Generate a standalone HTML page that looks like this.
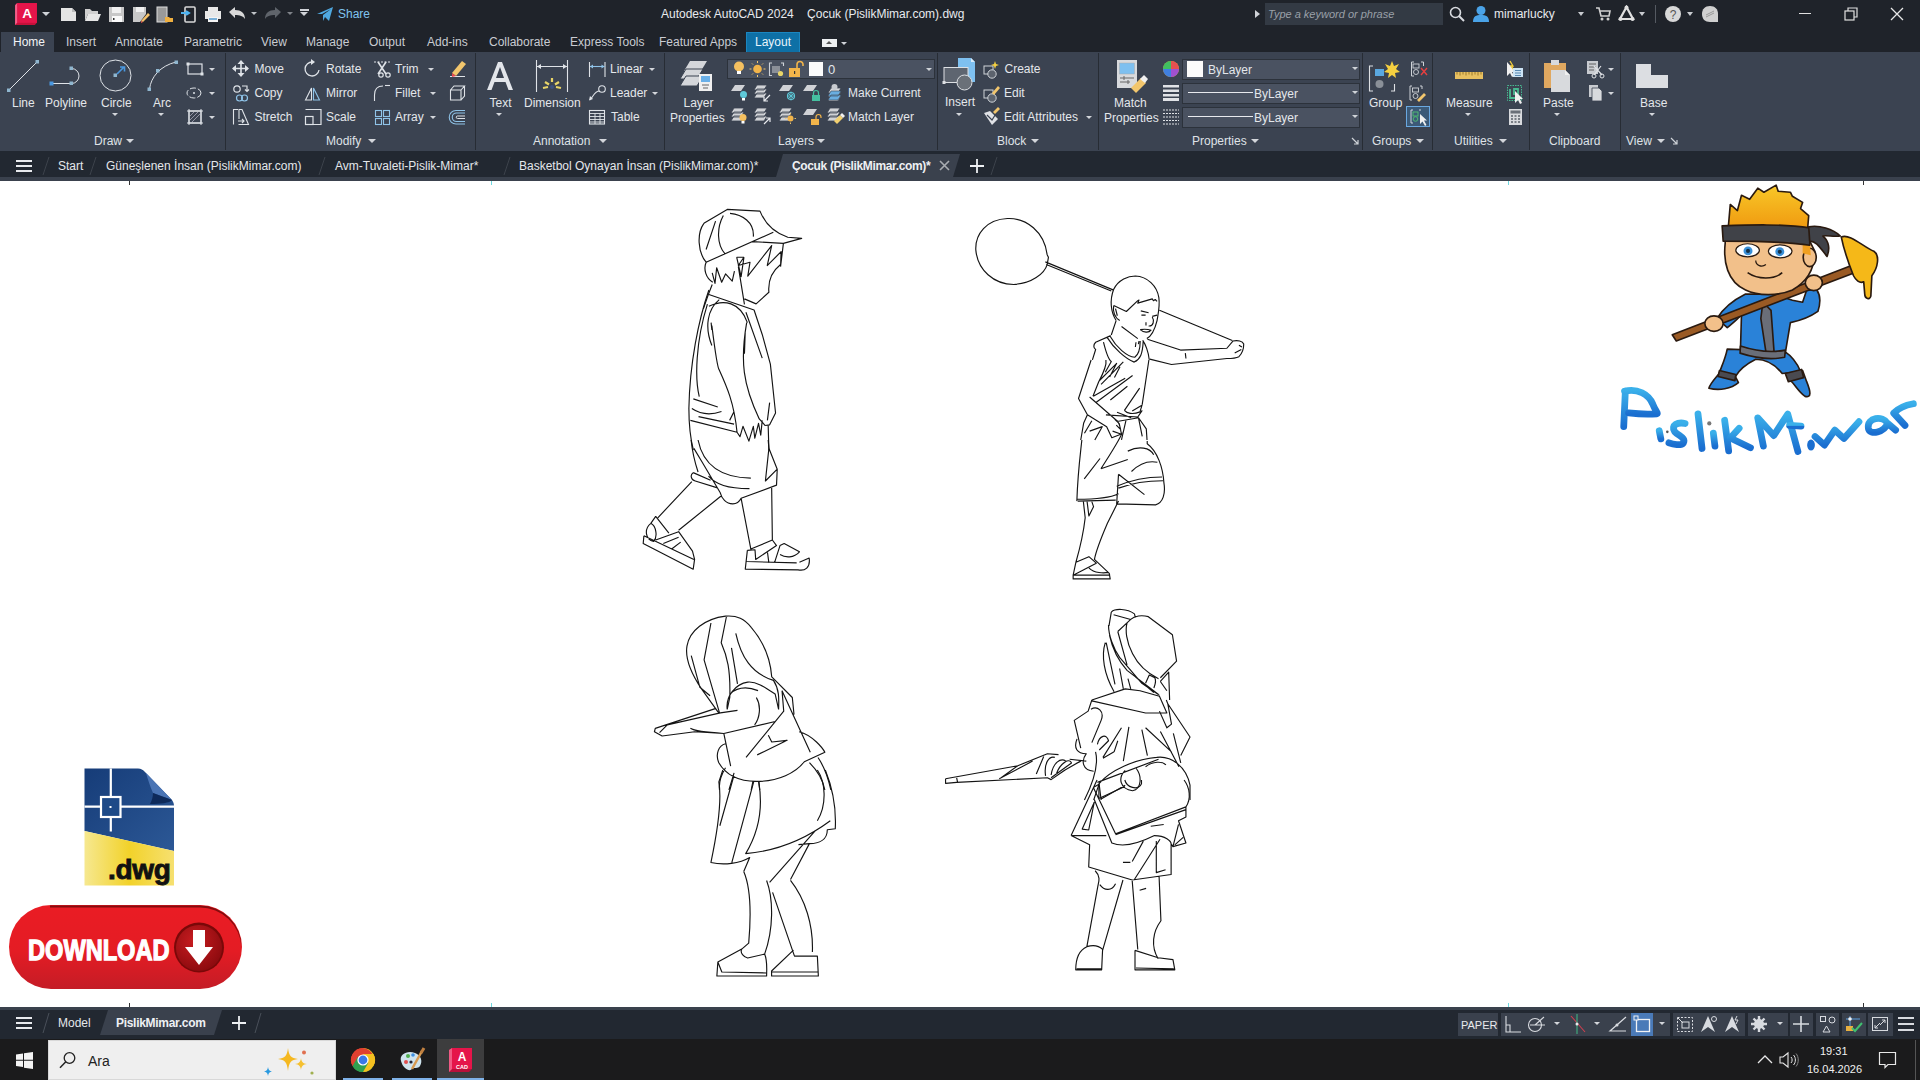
<!DOCTYPE html>
<html><head><meta charset="utf-8">
<style>
*{margin:0;padding:0;box-sizing:border-box}
html,body{width:1920px;height:1080px;overflow:hidden;background:#fff;font-family:"Liberation Sans",sans-serif}
.a{position:absolute}
.t{position:absolute;white-space:nowrap;color:#e6e8ec;font-size:12px;line-height:14px}
#title{left:0;top:0;width:1920px;height:28px;background:#1f232a}
#tabs{left:0;top:28px;width:1920px;height:24px;background:#1f232a}
</style></head><body>
<div id="title" class="a">
<!-- logo -->
<svg class="a" style="left:13px;top:0px" width="27" height="27" viewBox="0 0 26 26">
<path d="M2 5 L4 3 L23 3 L23 22 L21 24 L2 24 Z" fill="#c5113a"/>
<path d="M4 3 L23 3 L23 22 L4 22 Z" fill="#e5154a"/>
<path d="M2 5 L4 3 L4 22 L2 24 Z" fill="#f0608a"/>
<text x="13.5" y="17.5" font-family="Liberation Sans" font-weight="bold" font-size="13" fill="#fff" text-anchor="middle">A</text>
</svg>
<div class="a" style="left:42px;top:12px;border-left:4px solid transparent;border-right:4px solid transparent;border-top:4px solid #d0d3d8"></div>
<!-- new -->
<svg class="a" style="left:60px;top:7px" width="18" height="15"><path d="M1 1 H12 L16 5 V14 H1 Z" fill="#e4e4e4"/><path d="M12 1 V5 H16" fill="#bbb"/></svg>
<!-- open -->
<svg class="a" style="left:84px;top:7px" width="18" height="15"><path d="M1 2 H6 L8 4 H14 V7 H4 L1 14 Z" fill="#cfcfcf"/><path d="M4 7 H17 L14 14 H1 Z" fill="#e6e6e6"/></svg>
<!-- save -->
<svg class="a" style="left:108px;top:6px" width="18" height="17"><path d="M1 1 H16 V16 H1 Z" fill="#c8c8c8"/><rect x="4" y="1" width="9" height="6" fill="#f0f0f0"/><rect x="4" y="10" width="10" height="6" fill="#fafafa"/><rect x="5" y="12" width="1.5" height="2" fill="#333"/></svg>
<!-- saveas -->
<svg class="a" style="left:132px;top:6px" width="18" height="17"><path d="M1 1 H14 V8 L8 16 H1 Z" fill="#c8c8c8"/><rect x="4" y="1" width="8" height="5" fill="#f0f0f0"/><path d="M9 15 L16 7 L18 9 L11 16 Z" fill="#f5c26b"/><path d="M9 15 L11 16 L9 17Z" fill="#e55"/></svg>
<!-- sheet -->
<svg class="a" style="left:156px;top:6px" width="18" height="17"><rect x="1" y="1" width="10" height="15" fill="#9a9a9a" stroke="#ddd" stroke-width="1"/><path d="M9 11 H13 L14 12 H17 V16 H9Z" fill="#f0b040"/></svg>
<!-- mobile -->
<svg class="a" style="left:180px;top:6px" width="18" height="17"><rect x="5" y="1" width="10" height="15" rx="1" fill="none" stroke="#d8d8d8" stroke-width="1.6"/><path d="M1 7 H8 M6 5 L9 7 L6 9" stroke="#4fb3f0" stroke-width="2" fill="none"/></svg>
<!-- print -->
<svg class="a" style="left:204px;top:6px" width="18" height="17"><rect x="4" y="1" width="10" height="4" fill="#e8e8e8"/><rect x="1" y="5" width="16" height="8" fill="#e8e8e8"/><rect x="4" y="11" width="10" height="5" fill="#f4f4f4"/><rect x="5" y="12" width="8" height="2" fill="#7bb0d8"/></svg>
<!-- undo -->
<svg class="a" style="left:228px;top:7px" width="18" height="14"><path d="M1 5 L7 0 V3 C13 3 17 6 17 12 C15 9 12 8 7 8 V11 Z" fill="#d8d8d8"/></svg>
<div class="a" style="left:251px;top:12px;border-left:3px solid transparent;border-right:3px solid transparent;border-top:3px solid #c0c3c8"></div>
<svg class="a" style="left:264px;top:7px" width="18" height="14"><path d="M17 5 L11 0 V3 C5 3 1 6 1 12 C3 9 6 8 11 8 V11 Z" fill="#5f646b"/></svg>
<div class="a" style="left:287px;top:12px;border-left:3px solid transparent;border-right:3px solid transparent;border-top:3px solid #80848a"></div>
<div class="a" style="left:300px;top:9px;width:9px;height:1.5px;background:#d0d3d8"></div>
<div class="a" style="left:300px;top:12px;border-left:4.5px solid transparent;border-right:4.5px solid transparent;border-top:4.5px solid #d0d3d8"></div>
<!-- share -->
<svg class="a" style="left:317px;top:6px" width="17" height="16"><path d="M0 8 L16 1 L12 15 L8 11 L6 15 L6 9 L14 3 L5 8Z" fill="#4fa8e0"/></svg>
<div class="t" style="left:338px;top:7px;color:#7fc3ef;font-size:12px">Share</div>
<div class="t" style="left:661px;top:7px;font-size:12px;color:#e8eaee">Autodesk AutoCAD 2024&nbsp;&nbsp;&nbsp;&nbsp;Çocuk (PislikMimar.com).dwg</div>
<!-- search area -->
<div class="a" style="left:1255px;top:10px;border-top:4px solid transparent;border-bottom:4px solid transparent;border-left:5px solid #d0d3d8"></div>
<div class="a" style="left:1265px;top:3px;width:178px;height:22px;background:#333a44"></div>
<div class="t" style="left:1268px;top:7px;font-size:11px;font-style:italic;color:#9aa0a8">Type a keyword or phrase</div>
<svg class="a" style="left:1449px;top:6px" width="16" height="16"><circle cx="6.5" cy="6.5" r="5" stroke="#d8dbe0" stroke-width="1.6" fill="none"/><path d="M10 10 L15 15" stroke="#d8dbe0" stroke-width="2"/></svg>
<svg class="a" style="left:1472px;top:5px" width="18" height="18"><circle cx="9" cy="5.5" r="4.5" fill="#4aa3e8"/><path d="M1 17 C1 11 4 10 9 10 C14 10 17 11 17 17Z" fill="#4aa3e8"/></svg>
<div class="t" style="left:1494px;top:7px;font-size:12px;color:#e8eaee">mimarlucky</div>
<div class="a" style="left:1578px;top:12px;border-left:3.5px solid transparent;border-right:3.5px solid transparent;border-top:4px solid #c8cbd0"></div>
<svg class="a" style="left:1595px;top:6px" width="16" height="16"><path d="M1 2 H4 L6 10 H14 L15 5 H5" stroke="#d0d0d0" stroke-width="1.6" fill="none"/><circle cx="7" cy="13" r="1.5" fill="#d0d0d0"/><circle cx="13" cy="13" r="1.5" fill="#d0d0d0"/></svg>
<svg class="a" style="left:1618px;top:5px" width="17" height="17"><path d="M8.5 2 L2 14 H15 Z" stroke="#e0e0e0" stroke-width="2.2" fill="none"/><circle cx="8.5" cy="2.5" r="2" fill="#e0e0e0"/><circle cx="2.5" cy="14" r="2" fill="#e0e0e0"/><circle cx="14.5" cy="14" r="2" fill="#e0e0e0"/></svg>
<div class="a" style="left:1639px;top:12px;border-left:3.5px solid transparent;border-right:3.5px solid transparent;border-top:4px solid #c8cbd0"></div>
<div class="a" style="left:1655px;top:5px;width:1px;height:18px;background:#555a62"></div>
<svg class="a" style="left:1664px;top:5px" width="18" height="18"><circle cx="9" cy="9" r="8" fill="#d8d8d8"/><text x="9" y="14" font-family="Liberation Sans" font-size="12" fill="#555" text-anchor="middle">?</text></svg>
<div class="a" style="left:1687px;top:12px;border-left:3.5px solid transparent;border-right:3.5px solid transparent;border-top:4px solid #c8cbd0"></div>
<svg class="a" style="left:1701px;top:5px" width="18" height="18"><path d="M9 1 C14 1 17 4 17 9 V17 H9 C4 17 1 14 1 9 C1 4 4 1 9 1Z" fill="#d0d0d0"/><path d="M5 10 L13 6 M5 12 L13 8" stroke="#999" stroke-width="1"/></svg>
<div class="a" style="left:1799px;top:13px;width:12px;height:1px;background:#e0e0e0"></div>
<svg class="a" style="left:1844px;top:7px" width="14" height="14"><rect x="1" y="4" width="9" height="9" fill="none" stroke="#e0e0e0" stroke-width="1.2"/><path d="M4 4 V1 H13 V10 H10" fill="none" stroke="#e0e0e0" stroke-width="1.2"/></svg>
<svg class="a" style="left:1890px;top:7px" width="14" height="14"><path d="M1 1 L13 13 M13 1 L1 13" stroke="#e8e8e8" stroke-width="1.3"/></svg>
</div>
<div id="tabs" class="a">
<div class="a" style="left:1px;top:4px;width:53px;height:20px;background:#3b4351"></div>
<div class="t" style="left:13px;top:7px;font-size:12px;color:#f2f4f6">Home</div>
<div class="t" style="left:66px;top:7px;font-size:12px;color:#c9ccd2">Insert</div>
<div class="t" style="left:115px;top:7px;font-size:12px;color:#c9ccd2">Annotate</div>
<div class="t" style="left:184px;top:7px;font-size:12px;color:#c9ccd2">Parametric</div>
<div class="t" style="left:261px;top:7px;font-size:12px;color:#c9ccd2">View</div>
<div class="t" style="left:306px;top:7px;font-size:12px;color:#c9ccd2">Manage</div>
<div class="t" style="left:369px;top:7px;font-size:12px;color:#c9ccd2">Output</div>
<div class="t" style="left:427px;top:7px;font-size:12px;color:#c9ccd2">Add-ins</div>
<div class="t" style="left:489px;top:7px;font-size:12px;color:#c9ccd2">Collaborate</div>
<div class="t" style="left:570px;top:7px;font-size:12px;color:#c9ccd2">Express Tools</div>
<div class="t" style="left:659px;top:7px;font-size:12px;color:#c9ccd2">Featured Apps</div>
<div class="a" style="left:746px;top:4px;width:54px;height:20px;background:#0e70a6;border:1px solid #1b86c0;border-bottom:none"></div>
<div class="t" style="left:755px;top:7px;font-size:12px;color:#e8f4fc">Layout</div>
<div class="a" style="left:822px;top:11px;width:15px;height:8px;background:#eef0f2"></div><div class="a" style="left:826px;top:13px;border-left:3.5px solid transparent;border-right:3.5px solid transparent;border-bottom:3.5px solid #555"></div>
<div class="a" style="left:841px;top:14px;border-left:3px solid transparent;border-right:3px solid transparent;border-top:3.5px solid #d0d3d8"></div>
</div>

<div class="a" style="left:0;top:52px;width:1920px;height:99px;background:#3b4351"></div>
<div class="a" style="left:0;top:151px;width:1920px;height:27px;background:#222831"></div>
<div class="a" style="left:0;top:177px;width:1920px;height:4px;background:#3a414d"></div>
<div class="a" style="left:225px;top:53px;width:1px;height:97px;background:#272c34"></div>
<div class="a" style="left:475px;top:53px;width:1px;height:97px;background:#272c34"></div>
<div class="a" style="left:664px;top:53px;width:1px;height:97px;background:#272c34"></div>
<div class="a" style="left:937px;top:53px;width:1px;height:97px;background:#272c34"></div>
<div class="a" style="left:1098px;top:53px;width:1px;height:97px;background:#272c34"></div>
<div class="a" style="left:1362px;top:53px;width:1px;height:97px;background:#272c34"></div>
<div class="a" style="left:1432px;top:53px;width:1px;height:97px;background:#272c34"></div>
<div class="a" style="left:1529px;top:53px;width:1px;height:97px;background:#272c34"></div>
<div class="a" style="left:1620px;top:53px;width:1px;height:97px;background:#272c34"></div>
<div class="t" style="left:94px;top:133.8px;color:#dfe2e7;font-size:12px;">Draw</div>
<div class="a" style="left:126.0px;top:139.0px;border-left:4px solid transparent;border-right:4px solid transparent;border-top:4px solid #d3d6db"></div>
<div class="t" style="left:326px;top:133.8px;color:#dfe2e7;font-size:12px;">Modify</div>
<div class="a" style="left:368.0px;top:139.0px;border-left:4px solid transparent;border-right:4px solid transparent;border-top:4px solid #d3d6db"></div>
<div class="t" style="left:533px;top:133.8px;color:#dfe2e7;font-size:12px;">Annotation</div>
<div class="a" style="left:599.0px;top:139.0px;border-left:4px solid transparent;border-right:4px solid transparent;border-top:4px solid #d3d6db"></div>
<div class="t" style="left:778px;top:133.8px;color:#dfe2e7;font-size:12px;">Layers</div>
<div class="a" style="left:817.0px;top:139.0px;border-left:4px solid transparent;border-right:4px solid transparent;border-top:4px solid #d3d6db"></div>
<div class="t" style="left:997px;top:133.8px;color:#dfe2e7;font-size:12px;">Block</div>
<div class="a" style="left:1031.0px;top:139.0px;border-left:4px solid transparent;border-right:4px solid transparent;border-top:4px solid #d3d6db"></div>
<div class="t" style="left:1192px;top:133.8px;color:#dfe2e7;font-size:12px;">Properties</div>
<div class="a" style="left:1251.0px;top:139.0px;border-left:4px solid transparent;border-right:4px solid transparent;border-top:4px solid #d3d6db"></div>
<div class="t" style="left:1372px;top:133.8px;color:#dfe2e7;font-size:12px;">Groups</div>
<div class="a" style="left:1416.0px;top:139.0px;border-left:4px solid transparent;border-right:4px solid transparent;border-top:4px solid #d3d6db"></div>
<div class="t" style="left:1454px;top:133.8px;color:#dfe2e7;font-size:12px;">Utilities</div>
<div class="a" style="left:1499.0px;top:139.0px;border-left:4px solid transparent;border-right:4px solid transparent;border-top:4px solid #d3d6db"></div>
<div class="t" style="left:1549px;top:133.8px;color:#dfe2e7;font-size:12px;">Clipboard</div>
<div class="t" style="left:1626px;top:133.8px;color:#dfe2e7;font-size:12px;">View</div>
<div class="a" style="left:1657.0px;top:139.0px;border-left:4px solid transparent;border-right:4px solid transparent;border-top:4px solid #d3d6db"></div>
<svg class="a" style="left:1350px;top:136px" width="10" height="10"><path d="M2 2 L8 8 M8 4 V8 H4" stroke="#cfd3d8" stroke-width="1.2" fill="none"/></svg>
<svg class="a" style="left:1669px;top:136px" width="10" height="10"><path d="M2 2 L8 8 M8 4 V8 H4" stroke="#cfd3d8" stroke-width="1.2" fill="none"/></svg>
<div class="t" style="left:12px;top:95.8px;color:#e4e7eb;font-size:12px;">Line</div>
<div class="t" style="left:45px;top:95.8px;color:#e4e7eb;font-size:12px;">Polyline</div>
<div class="t" style="left:101px;top:95.8px;color:#e4e7eb;font-size:12px;">Circle</div>
<div class="t" style="left:153px;top:95.8px;color:#e4e7eb;font-size:12px;">Arc</div>
<div class="a" style="left:112.0px;top:112.8px;border-left:3.5px solid transparent;border-right:3.5px solid transparent;border-top:3.5px solid #d3d6db"></div>
<div class="a" style="left:158.0px;top:112.8px;border-left:3.5px solid transparent;border-right:3.5px solid transparent;border-top:3.5px solid #d3d6db"></div>
<div class="a" style="left:209.0px;top:67.8px;border-left:3.5px solid transparent;border-right:3.5px solid transparent;border-top:3.5px solid #d3d6db"></div>
<div class="a" style="left:209.0px;top:91.8px;border-left:3.5px solid transparent;border-right:3.5px solid transparent;border-top:3.5px solid #d3d6db"></div>
<div class="a" style="left:209.0px;top:115.8px;border-left:3.5px solid transparent;border-right:3.5px solid transparent;border-top:3.5px solid #d3d6db"></div>
<div class="t" style="left:254.5px;top:61.8px;color:#e4e7eb;font-size:12px;">Move</div>
<div class="t" style="left:254.5px;top:85.8px;color:#e4e7eb;font-size:12px;">Copy</div>
<div class="t" style="left:254.5px;top:109.8px;color:#e4e7eb;font-size:12px;">Stretch</div>
<div class="t" style="left:326px;top:61.8px;color:#e4e7eb;font-size:12px;">Rotate</div>
<div class="t" style="left:326px;top:85.8px;color:#e4e7eb;font-size:12px;">Mirror</div>
<div class="t" style="left:326px;top:109.8px;color:#e4e7eb;font-size:12px;">Scale</div>
<div class="t" style="left:395px;top:61.8px;color:#e4e7eb;font-size:12px;">Trim</div>
<div class="t" style="left:395px;top:85.8px;color:#e4e7eb;font-size:12px;">Fillet</div>
<div class="t" style="left:395px;top:109.8px;color:#e4e7eb;font-size:12px;">Array</div>
<div class="a" style="left:428.0px;top:67.8px;border-left:3.5px solid transparent;border-right:3.5px solid transparent;border-top:3.5px solid #d3d6db"></div>
<div class="a" style="left:430.0px;top:91.8px;border-left:3.5px solid transparent;border-right:3.5px solid transparent;border-top:3.5px solid #d3d6db"></div>
<div class="a" style="left:430.0px;top:115.8px;border-left:3.5px solid transparent;border-right:3.5px solid transparent;border-top:3.5px solid #d3d6db"></div>
<div class="t" style="left:489.5px;top:95.8px;color:#e4e7eb;font-size:12px;">Text</div>
<div class="t" style="left:524px;top:95.8px;color:#e4e7eb;font-size:12px;">Dimension</div>
<div class="a" style="left:496.0px;top:112.8px;border-left:3.5px solid transparent;border-right:3.5px solid transparent;border-top:3.5px solid #d3d6db"></div>
<div class="t" style="left:610px;top:61.8px;color:#e4e7eb;font-size:12px;">Linear</div>
<div class="t" style="left:610px;top:85.8px;color:#e4e7eb;font-size:12px;">Leader</div>
<div class="t" style="left:611px;top:109.8px;color:#e4e7eb;font-size:12px;">Table</div>
<div class="a" style="left:649.0px;top:67.8px;border-left:3.5px solid transparent;border-right:3.5px solid transparent;border-top:3.5px solid #d3d6db"></div>
<div class="a" style="left:652.0px;top:91.8px;border-left:3.5px solid transparent;border-right:3.5px solid transparent;border-top:3.5px solid #d3d6db"></div>
<div class="t" style="left:683.5px;top:95.8px;color:#e4e7eb;font-size:12px;">Layer</div>
<div class="t" style="left:670px;top:110.8px;color:#e4e7eb;font-size:12px;">Properties</div>
<div class="a" style="left:727px;top:59px;width:208px;height:20px;background:#4a5261;border:1px solid #2c323b"></div>
<div class="t" style="left:828px;top:62.8px;color:#e4e7eb;font-size:13px;">0</div>
<div class="a" style="left:925.5px;top:67.8px;border-left:3.5px solid transparent;border-right:3.5px solid transparent;border-top:3.5px solid #cfd3d8"></div>
<div class="t" style="left:848px;top:85.8px;color:#e4e7eb;font-size:12px;">Make Current</div>
<div class="t" style="left:848px;top:109.8px;color:#e4e7eb;font-size:12px;">Match Layer</div>
<div class="t" style="left:945px;top:94.8px;color:#e4e7eb;font-size:12px;">Insert</div>
<div class="a" style="left:956.0px;top:112.8px;border-left:3.5px solid transparent;border-right:3.5px solid transparent;border-top:3.5px solid #d3d6db"></div>
<div class="t" style="left:1004.5px;top:61.8px;color:#e4e7eb;font-size:12px;">Create</div>
<div class="t" style="left:1004px;top:85.8px;color:#e4e7eb;font-size:12px;">Edit</div>
<div class="t" style="left:1004px;top:109.8px;color:#e4e7eb;font-size:12px;">Edit Attributes</div>
<div class="a" style="left:1086.0px;top:115.8px;border-left:3.5px solid transparent;border-right:3.5px solid transparent;border-top:3.5px solid #d3d6db"></div>
<div class="t" style="left:1114px;top:95.8px;color:#e4e7eb;font-size:12px;">Match</div>
<div class="t" style="left:1104px;top:110.8px;color:#e4e7eb;font-size:12px;">Properties</div>
<div class="a" style="left:1182px;top:59px;width:178px;height:21px;background:#4a5261;border:1px solid #2c323b"></div>
<div class="a" style="left:1351.5px;top:66.8px;border-left:3.5px solid transparent;border-right:3.5px solid transparent;border-top:3.5px solid #cfd3d8"></div>
<div class="a" style="left:1182px;top:83px;width:178px;height:21px;background:#4a5261;border:1px solid #2c323b"></div>
<div class="a" style="left:1351.5px;top:90.8px;border-left:3.5px solid transparent;border-right:3.5px solid transparent;border-top:3.5px solid #cfd3d8"></div>
<div class="a" style="left:1182px;top:107px;width:178px;height:21px;background:#4a5261;border:1px solid #2c323b"></div>
<div class="a" style="left:1351.5px;top:114.8px;border-left:3.5px solid transparent;border-right:3.5px solid transparent;border-top:3.5px solid #cfd3d8"></div>
<div class="t" style="left:1208px;top:62.8px;color:#e4e7eb;font-size:12px;">ByLayer</div>
<div class="t" style="left:1254px;top:86.8px;color:#e4e7eb;font-size:12px;">ByLayer</div>
<div class="t" style="left:1254px;top:110.8px;color:#e4e7eb;font-size:12px;">ByLayer</div>
<div class="t" style="left:1369px;top:95.8px;color:#e4e7eb;font-size:12px;">Group</div>
<div class="t" style="left:1446px;top:95.8px;color:#e4e7eb;font-size:12px;">Measure</div>
<div class="a" style="left:1465.0px;top:112.8px;border-left:3.5px solid transparent;border-right:3.5px solid transparent;border-top:3.5px solid #d3d6db"></div>
<div class="t" style="left:1543px;top:95.8px;color:#e4e7eb;font-size:12px;">Paste</div>
<div class="a" style="left:1554.0px;top:112.8px;border-left:3.5px solid transparent;border-right:3.5px solid transparent;border-top:3.5px solid #d3d6db"></div>
<div class="a" style="left:1608.0px;top:67.8px;border-left:3.5px solid transparent;border-right:3.5px solid transparent;border-top:3.5px solid #d3d6db"></div>
<div class="a" style="left:1608.0px;top:91.8px;border-left:3.5px solid transparent;border-right:3.5px solid transparent;border-top:3.5px solid #d3d6db"></div>
<div class="t" style="left:1640px;top:95.8px;color:#e4e7eb;font-size:12px;">Base</div>
<div class="a" style="left:1649.0px;top:112.8px;border-left:3.5px solid transparent;border-right:3.5px solid transparent;border-top:3.5px solid #d3d6db"></div>
<svg class="a" style="left:0;top:0" width="1920" height="151"><line x1="9" y1="90" x2="37" y2="62" stroke="#dfe3e8" stroke-width="1"/><rect x="7" y="88.5" width="3.5" height="3.5" fill="#8fb6cf"/><rect x="35.5" y="60" width="3.5" height="3.5" fill="#8fb6cf"/><path d="M52 83.5 H71.5 M71.5 68.5 A7.5 7.5 0 0 1 71.5 83.5" stroke="#dfe3e8" fill="none"/><rect x="49.5" y="81.5" width="4" height="4" fill="#4a98e0"/><rect x="69.5" y="81.5" width="3.5" height="3.5" fill="#8fb6cf"/><rect x="69.5" y="66.5" width="3.5" height="3.5" fill="#8fb6cf"/><circle cx="115.5" cy="75.5" r="15.5" stroke="#dfe3e8" fill="none"/><rect x="113.5" y="73.5" width="3.5" height="3.5" fill="#8fb6cf"/><path d="M117 74 L124 67 M120 67 H124.5 V71.5" stroke="#4a98e0" stroke-width="1.6" fill="none"/><path d="M149.5 89 C151 77 160 66 176 62" stroke="#dfe3e8" fill="none"/><rect x="147.5" y="87.5" width="3.5" height="3.5" fill="#8fb6cf"/><rect x="156" y="69" width="3.5" height="3.5" fill="#8fb6cf"/><rect x="174.5" y="60.5" width="3.5" height="3.5" fill="#8fb6cf"/><rect x="188" y="64" width="14" height="10" stroke="#dfe3e8" fill="none" stroke-width="1.2"/><rect x="186.5" y="62.5" width="3" height="3" fill="#dfe3e8"/><rect x="200.5" y="72.5" width="3" height="3" fill="#dfe3e8"/><ellipse cx="194" cy="93" rx="7" ry="5" stroke="#dfe3e8" fill="none" stroke-dasharray="6 2"/><circle cx="194" cy="93" r="1" fill="#dfe3e8"/><rect x="189" y="111" width="12" height="12" stroke="#dfe3e8" fill="none" stroke-width="1.2"/><path d="M187 111 H203 M187 123 H203 M189 109 V125 M201 109 V125" stroke="#dfe3e8"/><path d="M190 120 L198 112 M192 122 L200 114 M190 116 L194 112" stroke="#aab" stroke-width="0.8"/><path d="M241 61 V76 M233 68.5 H248" stroke="#dfe3e8" stroke-width="1.6"/><path d="M241 60 L237.5 64 H244.5Z M241 77 L237.5 73 H244.5Z M232 68.5 L236 65 V72Z M249 68.5 L245 65 V72Z" fill="#dfe3e8"/><circle cx="237" cy="89" r="3.2" stroke="#dfe3e8" fill="none" stroke-width="1.2"/><path d="M242 86 H247 V91 M245 89.5 L247 91.5 L249 89.5" stroke="#dfe3e8" fill="none" stroke-width="1.2"/><circle cx="239.5" cy="98" r="3" stroke="#8fc3e8" fill="none" stroke-width="1.2"/><circle cx="244.5" cy="98" r="3" stroke="#8fc3e8" fill="none" stroke-width="1.2"/><path d="M233.5 124.5 V109.5 H238.5 M239 109.5 H242 L248.5 124.5 H238.5" stroke="#dfe3e8" fill="none" stroke-width="1.1"/><path d="M239 110 V119 M238 121 H244 M242 119 L244 121 L242 123" stroke="#dfe3e8" fill="none" stroke-width="1.1"/><path d="M319 70 A7 7 0 1 1 312.5 62" stroke="#dfe3e8" fill="none" stroke-width="1.3"/><path d="M311 59 L315 62 L311 65Z" fill="#dfe3e8"/><path d="M305.5 100 L311.5 88 V100Z" stroke="#dfe3e8" fill="none" stroke-width="1.1"/><path d="M313.5 88 L319.5 100 H313.5Z" stroke="#8fc3e8" fill="none" stroke-width="1.1"/><path d="M305.5 109.5 H321 V124.5 H313" stroke="#dfe3e8" fill="none" stroke-width="1.2"/><rect x="305.5" y="116.5" width="7.5" height="8" stroke="#dfe3e8" fill="none" stroke-width="1.2"/><path d="M374 62 H390" stroke="#dfe3e8" stroke-dasharray="2 1.5"/><path d="M378 62 L386 74 M386 62 L378 74" stroke="#dfe3e8" stroke-width="1.6"/><circle cx="381" cy="75" r="2.2" stroke="#dfe3e8" fill="none" stroke-width="1.2"/><circle cx="388" cy="75" r="2.2" stroke="#dfe3e8" fill="none" stroke-width="1.2"/><path d="M374.5 101 V95 C374.5 89 378 86 383 86 H383" stroke="#dfe3e8" fill="none" stroke-width="1.1"/><path d="M385 85.5 H390" stroke="#dfe3e8" stroke-width="1.1"/><rect x="375.5" y="110.5" width="6" height="6" stroke="#8fc3e8" fill="none" stroke-width="1.1"/><rect x="383.5" y="110.5" width="6" height="6" stroke="#8fc3e8" fill="none" stroke-width="1.1"/><rect x="375.5" y="118.5" width="6" height="6" stroke="#8fc3e8" fill="none" stroke-width="1.1"/><rect x="383.5" y="118.5" width="6" height="6" stroke="#8fc3e8" fill="none" stroke-width="1.1"/><path d="M450 76.5 H465" stroke="#dfe3e8" stroke-width="1"/><path d="M452 73 L462 61 L466 64 L456 76Z" fill="#f2c66d"/><path d="M452 73 L456 76 L452 77Z" fill="#e8484f"/><path d="M450.5 90 H461 V100 H450.5Z M450.5 90 L454 86 H464.5 L461 90 M464.5 86 V96 L461 100" stroke="#dfe3e8" fill="none" stroke-width="1.1"/><path d="M465 110.5 H456 A6 6 0 0 0 456 124 H465 M465 113 H456.5 A3.8 3.8 0 0 0 456.5 121.5 H465" stroke="#8fc3e8" fill="none" stroke-width="1.1"/><path d="M465 116 H457.5 A1.2 1.2 0 0 0 457.5 118.5 H465" stroke="#dfe3e8" fill="none" stroke-width="1"/><path d="M487 90 L498 62 H502 L513 90 H508.5 L505.5 82 H494.5 L491.5 90 Z M496 78 H504 L500 67 Z" fill="#e2e5ea" fill-rule="evenodd"/><path d="M536.5 60 V92 M567.5 60 V92 M537 66.5 H567" stroke="#dfe3e8" stroke-width="1.1"/><path d="M537 66.5 L541 64 V69Z M567 66.5 L563 64 V69Z" fill="#dfe3e8"/><path d="M545 82 L549 84.5 M552 78 V82 M559 82 L555 84.5 M543 88 L548 87 M561 88 L556 87" stroke="#e8d468" stroke-width="2.2"/><circle cx="552" cy="87" r="2" fill="#3a5080"/><path d="M589.5 62 V77 M605 62 V77" stroke="#dfe3e8" stroke-width="1.1"/><path d="M590 66.5 H604.5" stroke="#8fc3e8" stroke-width="1.1"/><path d="M590 66.5 L593 64.5 V68.5Z M604.5 66.5 L601.5 64.5 V68.5Z" fill="#8fc3e8"/><circle cx="602" cy="89" r="3.3" stroke="#dfe3e8" fill="none" stroke-width="1.1"/><path d="M599.5 91 C595 91 594 95 590 100" stroke="#dfe3e8" fill="none" stroke-width="1.1"/><path d="M589 100.5 L590 96 L593 99Z" fill="#dfe3e8"/><rect x="589.5" y="110.5" width="15" height="13.5" stroke="#dfe3e8" fill="none" stroke-width="1.1"/><path d="M590 113.5 H604.5 M590 116.5 H604.5 M590 119.5 H604.5 M590 122 H604.5 M595 113.5 V124 M600 113.5 V124" stroke="#dfe3e8" stroke-width="0.9"/><path d="M684 71 L690 61 H707 L701 71Z" fill="#d4d6da"/><path d="M680 79 L686 69 H703 L697 79Z" fill="#d4d6da" stroke="#3b4351" stroke-width="1"/><path d="M680 86 L686 76 H703 L697 86Z" fill="#d4d6da" stroke="#3b4351" stroke-width="1"/><rect x="699" y="74" width="13" height="17" fill="#f0f0f0"/><rect x="701" y="76" width="9" height="6" fill="#6ab0e8"/><path d="M702 85 H709 M703 88 H708" stroke="#555" stroke-width="0.9"/><circle cx="739" cy="66.5" r="5" fill="#f5c060"/><rect x="737" y="71" width="4" height="3" fill="#fff"/><circle cx="757.5" cy="69" r="4.3" fill="#f2b44a"/><path d="M757.5 61 V63 M757.5 75 V77 M749.5 69 H751.5 M763.5 69 H765.5 M752 63.5 L753 64.5 M762 73.5 L763 74.5 M752 74.5 L753 73.5 M762 64.5 L763 63.5" stroke="#f2c870" stroke-width="1"/><path d="M772 63 H769.5 V75.5 H772 M781 63 H783.5 V66 M769.5 63 V66" stroke="#cfd3d8" fill="none" stroke-width="1.1"/><rect x="772" y="66" width="8" height="7" fill="#8a8f98"/><circle cx="780.5" cy="73.5" r="2.6" fill="#e8d468"/><rect x="789" y="68" width="11" height="9" fill="#f2b44a"/><path d="M797 68 V64.5 A3 3 0 0 1 803 64.5 V66" stroke="#f2b44a" stroke-width="1.6" fill="none"/><rect x="794" y="71" width="1.2" height="3" fill="#333"/><rect x="809" y="62" width="14" height="14" fill="#fbfbfb"/><path d="M731 91 L735 85 H745 L741 91Z" fill="#d0d2d6"/><circle cx="743.5" cy="94.5" r="3.5" fill="#5ec8d8"/><rect x="742" y="98" width="3" height="2.5" fill="#fff"/><path d="M754 90 L757 85 H767 L764 90Z M754 94 L757 89 H767 L764 94Z M754 98 L757 93 H767 L764 98Z" fill="#d0d2d6" stroke="#3b4351" stroke-width="0.8"/><path d="M770 95 L764 101 M764 97 V101 H768" stroke="#e8eaee" stroke-width="1.2" fill="none"/><path d="M779 91 L783 85 H793 L789 91Z" fill="#d0d2d6"/><circle cx="791" cy="96" r="3.5" fill="none" stroke="#5ec8d8" stroke-width="1.2"/><path d="M791 91.5 V100.5 M787 96 H795 M788 93 L794 99 M794 93 L788 99" stroke="#5ec8d8" stroke-width="0.9"/><path d="M803 91 L807 85 H817 L813 91Z" fill="#d0d2d6"/><rect x="812" y="95" width="8" height="6" fill="#45c0a0"/><path d="M813.5 95 V93 A2.5 2.5 0 0 1 818.5 93 V95" stroke="#45c0a0" stroke-width="1.2" fill="none"/><path d="M828 93 L831 88 H841 L838 93Z M828 97 L831 92 H841 L838 97Z M828 101 L831 96 H841 L838 101Z" fill="#d8dadd" stroke="#3b4351" stroke-width="0.8"/><path d="M828 96 L831 91 H841 L838 96Z M828 100 L831 95 H841 L838 100Z" fill="#6aaee0" stroke="#3b4351" stroke-width="0.6"/><circle cx="834.5" cy="87" r="3" fill="#c8cbd0"/><path d="M731 113 L734 108 H744 L741 113Z M731 117 L734 112 H744 L741 117Z M731 121 L734 116 H744 L741 121Z" fill="#d0d2d6" stroke="#3b4351" stroke-width="0.8"/><circle cx="743" cy="117.5" r="3.5" fill="#f5c060"/><rect x="741.5" y="121" width="3" height="2.5" fill="#fff"/><path d="M754 113 L757 108 H767 L764 113Z M754 117 L757 112 H767 L764 117Z M754 121 L757 116 H767 L764 121Z" fill="#d0d2d6" stroke="#3b4351" stroke-width="0.8"/><path d="M764 124 L770 118 M766 118 H770 V122" stroke="#e8eaee" stroke-width="1.2" fill="none"/><path d="M779 113 L782 108 H792 L789 113Z M779 117 L782 112 H792 L789 117Z M779 121 L782 116 H792 L789 121Z" fill="#d0d2d6" stroke="#3b4351" stroke-width="0.8"/><circle cx="790.5" cy="118.5" r="3" fill="#f2b44a"/><path d="M790.5 113 V114.5 M790.5 122.5 V124 M785 118.5 H786.5 M794.5 118.5 H796" stroke="#f2c870" stroke-width="0.9"/><path d="M803 115 L807 109 H817 L813 115Z" fill="#d0d2d6"/><rect x="811" y="119" width="8" height="6" fill="#f2b44a"/><path d="M816 119 V117 A2.5 2.5 0 0 1 821 117 V118" stroke="#f2b44a" stroke-width="1.2" fill="none"/><path d="M827 113 L830 108 H840 L837 113Z M827 117 L830 112 H840 L837 117Z M827 121 L830 116 H840 L837 121Z" fill="#d0d2d6" stroke="#3b4351" stroke-width="0.8"/><path d="M834 121 L840 115 L843 118 L837 124Z" fill="#f2d070"/><path d="M840 115 L842 113 L845 116 L843 118Z" fill="#f0f0f0"/><path d="M958 58 H971 L975 62 V82 H958Z" fill="#7ec0f0"/><path d="M971 58 L975 62 H971Z" fill="#d8ecfa"/><rect x="944" y="67.5" width="24" height="15" fill="#5e6570" stroke="#dde0e4" stroke-width="1"/><circle cx="964.5" cy="82.5" r="7.5" fill="#6a7078" stroke="#dde0e4" stroke-width="1"/><rect x="942.5" y="81" width="3" height="3" fill="#dde0e4"/><rect x="984" y="66" width="9" height="8" fill="none" stroke="#cfd3d8" stroke-width="1"/><circle cx="992" cy="74" r="4.2" fill="#5c636e" stroke="#cfd3d8" stroke-width="1"/><path d="M995 61 L996 64 L999 65 L996 66 L995 69 L994 66 L991 65 L994 64Z" fill="#f5d040"/><rect x="984" y="90" width="9" height="8" fill="none" stroke="#cfd3d8" stroke-width="1"/><circle cx="992" cy="98" r="4.2" fill="#5c636e" stroke="#cfd3d8" stroke-width="1"/><path d="M992 93 L998 86 L1000 88 L994 95Z" fill="#f2c66d"/><path d="M984 113 L990 111 L998 119 L992 125Z" fill="#e0e2e6"/><path d="M987 115 L992 120 L997 112" stroke="#3b4351" stroke-width="1.2" fill="none"/><path d="M993 112 L998 107 L1000 109 L995 114Z" fill="#f2c66d"/><rect x="1117" y="60" width="20" height="28" fill="#d8dadd"/><rect x="1119.5" y="63" width="15" height="11" fill="#7ec0f0" stroke="#aaa" stroke-width="0.5"/><path d="M1120 78 H1134 M1120 82 H1130 M1124 76 V80 M1128 80 V84" stroke="#666" stroke-width="1"/><path d="M1131 88 L1141 78 L1146 83 L1136 93Z" fill="#f2c66d"/><path d="M1140 79 L1144 75 L1148 79 L1145 83Z" fill="#f0f0f0"/><circle cx="1171" cy="69" r="8" fill="#e0a030"/><path d="M1171 69 L1171 61 A8 8 0 0 1 1179 69Z" fill="#e85050"/><path d="M1171 69 L1179 69 A8 8 0 0 1 1171 77Z" fill="#a050d0"/><path d="M1171 69 L1171 77 A8 8 0 0 1 1163 69Z" fill="#4080e0"/><path d="M1171 69 L1163 69 A8 8 0 0 1 1171 61Z" fill="#40c060"/><rect x="1163" y="85" width="16" height="2.5" fill="#e0e2e6"/><rect x="1163" y="89.5" width="16" height="2.5" fill="#e0e2e6"/><rect x="1163" y="94" width="16" height="2.5" fill="#e0e2e6"/><rect x="1163" y="98" width="16" height="3" fill="#e0e2e6"/><path d="M1163 110 H1179 M1163 113.5 H1179 M1163 117 H1179 M1163 120.5 H1179 M1163 124 H1179" stroke="#e0e2e6" stroke-width="1.2" stroke-dasharray="2 1"/><rect x="1187" y="61" width="16" height="16" fill="#fbfbfb"/><path d="M1188 92.5 H1253 M1188 116.5 H1253" stroke="#e8eaee" stroke-width="1"/><path d="M1373 66 H1369.5 V91 H1373 M1391 91 H1394.5 V84" stroke="#dde0e4" stroke-width="1.1" fill="none"/><rect x="1375" y="69" width="9" height="7" fill="#5aa8e0"/><circle cx="1379.5" cy="84" r="4" fill="#8a9098"/><path d="M1392 61 L1394 66 L1399 64 L1396 69 L1400 72 L1395 73 L1396 78 L1392 75 L1388 78 L1389 73 L1384 72 L1388 69 L1385 64 L1390 66Z" fill="#f5d040"/><path d="M1414 62 H1411.5 V76 H1414 M1421 62 H1423.5 V66" stroke="#cfd3d8" stroke-width="1" fill="none"/><rect x="1413" y="64" width="6" height="4" fill="none" stroke="#cfd3d8" stroke-width="0.9"/><circle cx="1416" cy="72" r="2.5" fill="none" stroke="#cfd3d8" stroke-width="0.9"/><path d="M1421 68 L1427 75 M1427 68 L1421 75" stroke="#e84040" stroke-width="1.4"/><path d="M1412 86 H1410 V100 H1412 M1420 86 H1422 V89" stroke="#cfd3d8" stroke-width="1" fill="none"/><rect x="1412.5" y="88" width="6" height="4" fill="none" stroke="#cfd3d8" stroke-width="0.9"/><circle cx="1415.5" cy="96" r="2.5" fill="none" stroke="#cfd3d8" stroke-width="0.9"/><path d="M1417 100 L1424 93 L1426 95 L1419 102Z" fill="#f2c66d"/><rect x="1406.5" y="106.5" width="23" height="20" fill="#3c5a78" stroke="#6aa8e0" stroke-width="1"/><path d="M1413 110 H1411 V123 H1413 M1419 110 H1421" stroke="#cfd3d8" stroke-width="1" fill="none"/><rect x="1413" y="112" width="5" height="4" fill="none" stroke="#50c070" stroke-width="0.9"/><circle cx="1415.5" cy="119" r="2.3" fill="none" stroke="#50c070" stroke-width="0.9"/><path d="M1420 114 V124 L1422.5 121.5 L1425 126 L1426.5 125 L1424 120.5 H1427Z" fill="#f0f0f0"/><rect x="1455" y="72" width="28" height="7" fill="#e8c060"/><path d="M1457 72 V74.5 M1460 72 V75.5 M1463 72 V74.5 M1466 72 V75.5 M1469 72 V74.5 M1472 72 V75.5 M1475 72 V74.5 M1478 72 V75.5 M1481 72 V74.5" stroke="#8a6a20" stroke-width="0.8"/><path d="M1507 62 V76 L1510 73 L1512 77 L1514 76 L1512 72 H1516Z" fill="#f0f0f0"/><path d="M1510 61 L1513 66 L1511 66 L1514 70" stroke="#f5d040" stroke-width="1.3" fill="none"/><rect x="1513" y="68" width="10" height="9" fill="#cde4f5"/><path d="M1515 70.5 H1521 M1515 73 H1521 M1515 75.5 H1521" stroke="#3a70a0" stroke-width="0.8"/><rect x="1507.5" y="85.5" width="14" height="15" fill="none" stroke="#48b890" stroke-dasharray="1.5 1"/><path d="M1510 89 V98 H1518 V89 H1514 V95" stroke="#48b890" stroke-width="1.8" fill="none"/><path d="M1515 91 V103 L1518 100 L1520 104 L1522 103 L1520 99 H1523Z" fill="#f0f0f0"/><rect x="1509" y="109" width="13" height="16" fill="#d8dadd"/><rect x="1510.5" y="110.5" width="10" height="3" fill="#6a7078"/><path d="M1511 116 H1513 M1514.5 116 H1516.5 M1518 116 H1520 M1511 119 H1513 M1514.5 119 H1516.5 M1518 119 H1520 M1511 122 H1513 M1514.5 122 H1516.5 M1518 122 H1520" stroke="#5a6068" stroke-width="1.6"/><rect x="1544" y="63" width="22" height="25" fill="#e0a860"/><rect x="1551" y="60" width="8" height="5" fill="#d8dadd"/><path d="M1551 70 H1565 L1570 75 V92 H1551Z" fill="#d8dadd"/><path d="M1565 70 V75 H1570Z" fill="#f0f0f0"/><rect x="1587" y="61" width="11" height="13" fill="#c8cbd0"/><path d="M1589 64 H1596 M1589 67 H1596 M1589 70 H1594" stroke="#555" stroke-width="0.9"/><path d="M1594 66 L1602 75 M1601 66 L1594 75" stroke="#e0e2e6" stroke-width="1.2"/><circle cx="1594" cy="76" r="2" fill="none" stroke="#e0e2e6"/><circle cx="1602" cy="76" r="2" fill="none" stroke="#e0e2e6"/><rect x="1589" y="85" width="9" height="12" fill="#c8cbd0"/><path d="M1592 88 H1599 L1602 91 V101 H1592Z" fill="#d8dadd" stroke="#3b4351" stroke-width="0.8"/><path d="M1636 64 H1651 V75 H1668 V88 H1636Z" fill="#dcdee2"/></svg>
<div class="a" style="left:16px;top:160px;width:16px;height:2px;background:#e8eaee;box-shadow:0 5px 0 #e8eaee,0 10px 0 #e8eaee"></div>
<svg class="a" style="left:42px;top:157px" width="8" height="18"><path d="M7 0 L1 18" stroke="#3c424b" stroke-width="1"/></svg>
<svg class="a" style="left:89px;top:157px" width="8" height="18"><path d="M7 0 L1 18" stroke="#3c424b" stroke-width="1"/></svg>
<svg class="a" style="left:318px;top:157px" width="8" height="18"><path d="M7 0 L1 18" stroke="#3c424b" stroke-width="1"/></svg>
<svg class="a" style="left:503px;top:157px" width="8" height="18"><path d="M7 0 L1 18" stroke="#3c424b" stroke-width="1"/></svg>
<svg class="a" style="left:990px;top:157px" width="8" height="18"><path d="M7 0 L1 18" stroke="#3c424b" stroke-width="1"/></svg>
<div class="t" style="left:58px;top:159.9px;color:#e4e7eb;font-size:12px;line-height:13.80px;">Start</div>
<div class="t" style="left:106px;top:159.9px;color:#e4e7eb;font-size:12px;line-height:13.80px;">Güneşlenen İnsan (PislikMimar.com)</div>
<div class="t" style="left:335px;top:159.9px;color:#e4e7eb;font-size:12px;line-height:13.80px;">Avm-Tuvaleti-Pislik-Mimar*</div>
<div class="t" style="left:519px;top:159.9px;color:#e4e7eb;font-size:12px;line-height:13.80px;">Basketbol Oynayan İnsan (PislikMimar.com)*</div>
<svg class="a" style="left:770px;top:153px" width="200" height="25"><path d="M6 24 L13 1 H190 L183 24Z" fill="#3a414d"/></svg>
<div class="t" style="left:792px;top:159.9px;color:#eef0f3;font-size:12px;line-height:13.80px;font-weight:bold;letter-spacing:-0.35px">Çocuk (PislikMimar.com)*</div>
<svg class="a" style="left:939px;top:160px" width="11" height="11"><path d="M1 1 L10 10 M10 1 L1 10" stroke="#a8acb2" stroke-width="1.6"/></svg>
<svg class="a" style="left:969px;top:158px" width="16" height="16"><path d="M8 1 V15 M1 8 H15" stroke="#eef0f3" stroke-width="1.8"/></svg>
<div class="a" style="left:0;top:181px;width:1920px;height:826px;background:#fff"></div>
<div class="a" style="left:129px;top:181px;width:1px;height:4px;background:#333"></div>
<div class="a" style="left:129px;top:1003px;width:1px;height:4px;background:#333"></div>
<div class="a" style="left:491px;top:181px;width:1px;height:4px;background:#6fd8e0"></div>
<div class="a" style="left:491px;top:1003px;width:1px;height:4px;background:#6fd8e0"></div>
<div class="a" style="left:1508px;top:181px;width:1px;height:4px;background:#6fd8e0"></div>
<div class="a" style="left:1508px;top:1003px;width:1px;height:4px;background:#6fd8e0"></div>
<div class="a" style="left:1863px;top:181px;width:1px;height:4px;background:#333"></div>
<div class="a" style="left:1863px;top:1003px;width:1px;height:4px;background:#333"></div>
<div class="a" style="left:0;top:1007px;width:1920px;height:33px;background:#222831"></div>
<div class="a" style="left:0;top:1007px;width:1920px;height:3px;background:#3a414d"></div>
<div class="a" style="left:16px;top:1017px;width:16px;height:2px;background:#e8eaee;box-shadow:0 5px 0 #e8eaee,0 10px 0 #e8eaee"></div>
<svg class="a" style="left:42px;top:1013px" width="8" height="20"><path d="M7 0 L1 20" stroke="#4a505a" stroke-width="1"/></svg>
<svg class="a" style="left:254px;top:1013px" width="8" height="20"><path d="M7 0 L1 20" stroke="#4a505a" stroke-width="1"/></svg>
<div class="t" style="left:58px;top:1016.9px;color:#e4e7eb;font-size:12px;line-height:13.80px;">Model</div>
<svg class="a" style="left:96px;top:1010px" width="130" height="25"><path d="M4 25 L12 0 H126 L118 25Z" fill="#3a414d"/></svg>
<div class="t" style="left:116px;top:1016.9px;color:#eef0f3;font-size:12px;line-height:13.80px;font-weight:bold;letter-spacing:-0.3px">PislikMimar.com</div>
<svg class="a" style="left:231px;top:1015px" width="16" height="16"><path d="M8 1 V15 M1 8 H15" stroke="#eef0f3" stroke-width="1.8"/></svg>
<div class="a" style="left:1458px;top:1013px;width:40px;height:23px;background:#3a414d"></div>
<div class="a" style="left:1501px;top:1013px;width:169px;height:23px;background:#3a414d"></div>
<div class="a" style="left:1673px;top:1013px;width:72px;height:23px;background:#3a414d"></div>
<div class="a" style="left:1748px;top:1013px;width:40px;height:23px;background:#3a414d"></div>
<div class="a" style="left:1790px;top:1013px;width:23px;height:23px;background:#3a414d"></div>
<div class="a" style="left:1816px;top:1013px;width:23px;height:23px;background:#3a414d"></div>
<div class="a" style="left:1842px;top:1013px;width:24px;height:23px;background:#3a414d"></div>
<div class="a" style="left:1868px;top:1013px;width:25px;height:23px;background:#3a414d"></div>
<div class="t" style="left:1461px;top:1018.9px;color:#e8eaee;font-size:11px;line-height:12.65px;">PAPER</div>
<div class="a" style="left:1553.5px;top:1022.2px;border-left:3.5px solid transparent;border-right:3.5px solid transparent;border-top:3.5px solid #d3d6db"></div>
<div class="a" style="left:1593.5px;top:1022.2px;border-left:3.5px solid transparent;border-right:3.5px solid transparent;border-top:3.5px solid #d3d6db"></div>
<div class="a" style="left:1631px;top:1013px;width:22px;height:23px;background:#4a7ab8"></div>
<div class="a" style="left:1658.5px;top:1022.2px;border-left:3.5px solid transparent;border-right:3.5px solid transparent;border-top:3.5px solid #d3d6db"></div>
<div class="a" style="left:1776.5px;top:1022.2px;border-left:3.5px solid transparent;border-right:3.5px solid transparent;border-top:3.5px solid #d3d6db"></div>
<svg class="a" style="left:0;top:0" width="1920" height="1080"><path d="M1506 1016 V1032 H1521 M1506 1025 H1510 V1032" stroke="#d8dbe0" stroke-width="1.1" fill="none"/><circle cx="1535" cy="1025" r="6.5" stroke="#d8dbe0" stroke-width="1.1" fill="none"/><path d="M1535 1025 L1544 1017 M1530 1025 H1545" stroke="#d8dbe0" stroke-width="1.1"/><path d="M1571 1016 L1585 1032" stroke="#d04050" stroke-width="1.1"/><path d="M1577 1014 V1034" stroke="#40b080" stroke-width="1.1"/><circle cx="1577" cy="1024" r="1.5" fill="#e8eaee"/><path d="M1626 1017 L1610 1031 H1626" stroke="#d8dbe0" stroke-width="1.2" fill="none"/><circle cx="1617" cy="1025" r="1.5" fill="#d8dbe0"/><rect x="1636.5" y="1019.5" width="13" height="12" stroke="#f0f2f5" stroke-width="1.3" fill="none"/><rect x="1634" y="1016" width="4" height="4" fill="#4a7ab8" stroke="#f0f2f5" stroke-width="1"/><rect x="1677.5" y="1017.5" width="15" height="14" stroke="#d8dbe0" stroke-dasharray="2 1.5" fill="none"/><rect x="1682" y="1022" width="7" height="6" stroke="#d8dbe0" fill="none"/><path d="M1678 1018 L1683 1023" stroke="#d8dbe0"/><path d="M1708 1016 L1701 1032 L1708 1027 L1715 1032Z" fill="#d8dbe0"/><circle cx="1714" cy="1019" r="2.5" stroke="#d8dbe0" fill="none"/><path d="M1732 1016 L1725 1032 L1732 1027 L1739 1032Z" fill="#d8dbe0"/><path d="M1737 1016 L1735 1020 H1738 L1736 1024" stroke="#d8dbe0" fill="none"/><circle cx="1759" cy="1024" r="5" fill="#d8dbe0"/><circle cx="1759" cy="1024" r="2" fill="#3a414d"/><path d="M1759 1016 V1032 M1751 1024 H1767 M1753.5 1018.5 L1764.5 1029.5 M1764.5 1018.5 L1753.5 1029.5" stroke="#d8dbe0" stroke-width="2.4"/><path d="M1801 1016 V1032 M1793 1024 H1809" stroke="#d8dbe0" stroke-width="1.6"/><rect x="1820.5" y="1016.5" width="5" height="5" stroke="#d8dbe0" fill="none"/><circle cx="1832" cy="1020" r="3" stroke="#d8dbe0" fill="none"/><path d="M1823 1032 L1826.5 1026 L1830 1032Z" stroke="#d8dbe0" fill="none"/><path d="M1846 1019 H1860 M1850 1016 V1030" stroke="#5aa0e0" stroke-width="1"/><rect x="1846" y="1026" width="7" height="5" fill="#e8b040"/><path d="M1852 1028 L1855 1031 L1862 1023" stroke="#40c070" stroke-width="2" fill="none"/><circle cx="1850" cy="1019" r="1.8" fill="#f0f0f0"/><rect x="1872.5" y="1017.5" width="15" height="13" stroke="#d8dbe0" fill="none"/><path d="M1875 1028 L1880 1023 M1885 1020 L1880 1025 M1875 1028 V1025 M1875 1028 H1878 M1885 1020 H1882 M1885 1020 V1023" stroke="#d8dbe0" fill="none"/><path d="M1898 1018 H1914 M1898 1024 H1914 M1898 1030 H1914" stroke="#d8dbe0" stroke-width="2"/></svg>
<div class="a" style="left:0;top:1039px;width:1920px;height:41px;background:#1b1b1c"></div>
<svg class="a" style="left:16px;top:1052px" width="17" height="17"><path d="M0 2.5 L7 1.5 V7.8 H0Z M8 1.3 L17 0 V7.8 H8Z M0 8.8 H7 V15 L0 14Z M8 8.8 H17 V17 L8 15.7Z" fill="#f4f4f4"/></svg>
<div class="a" style="left:48px;top:1040px;width:288px;height:40px;background:#efefef;border:1px solid #d8d8d8"></div>
<svg class="a" style="left:59px;top:1051px" width="18" height="18"><circle cx="10.5" cy="7" r="5.3" stroke="#222" stroke-width="1.3" fill="none"/><path d="M6.8 10.8 L1 16.8" stroke="#222" stroke-width="1.5"/></svg>
<div class="t" style="left:88px;top:1053.1px;color:#222;font-size:14px;line-height:16.10px;">Ara</div>
<svg class="a" style="left:259px;top:1047px" width="66" height="32">
<path d="M29 1 C30 9 32 11 39 12 C32 13 30 15 29 24 C28 15 26 13 19 12 C26 11 28 9 29 1Z" fill="#f5b820"/>
<path d="M42 11 C42.5 15 44 16.5 48 17 C44 17.5 42.5 19 42 23 C41.5 19 40 17.5 36 17 C40 16.5 41.5 15 42 11Z" fill="#f5c030"/>
<path d="M9 20 C9.5 23 10.5 24 13 24.5 C10.5 25 9.5 26 9 29 C8.5 26 7.5 25 5 24.5 C7.5 24 8.5 23 9 20Z" fill="#2a9ae0"/>
<circle cx="45" cy="5.5" r="2" fill="#e07050"/><circle cx="53" cy="26" r="1.6" fill="#a0b050"/></svg>
<svg class="a" style="left:350px;top:1047px" width="26" height="26" viewBox="-13 -13 26 26">
<path d="M0 -12 A12 12 0 0 1 10.4 6 L5.2 3 A6 6 0 0 0 0 -6Z" fill="#f4c020"/>
<path d="M0 -12 A12 12 0 0 0 -10.4 6 L-5.2 3 A6 6 0 0 1 0 -6Z" fill="#e04030"/>
<path d="M-10.4 6 A12 12 0 0 0 10.4 6 L5.2 3 A6 6 0 0 1 -5.2 3Z" fill="#30a050"/>
<path d="M0 -12 A12 12 0 0 0 -10.4 6 L-5.2 -3 H10.4 A12 12 0 0 0 0 -12Z" fill="#e04030"/>
<path d="M-10.4 6 A12 12 0 0 0 0 12 L5.2 3 L-5.2 -3Z" fill="#30a050"/>
<path d="M0 12 A12 12 0 0 0 10.4 -6 H0 L5.2 3Z" fill="#f4c020"/>
<circle r="5.6" fill="#fff"/><circle r="4.4" fill="#3a78e8"/></svg>
<svg class="a" style="left:398px;top:1047px" width="28" height="26">
<path d="M3 14 C1 7 10 3 17 6 C23 8 25 14 22 19 C20 22 16 20 14 22 C12 25 5 22 3 14Z" fill="#cfe4ee"/>
<circle cx="8" cy="15" r="2" fill="#e05050"/><circle cx="10" cy="9" r="2" fill="#50b050"/><circle cx="15" cy="8" r="1.8" fill="#4090e0"/><circle cx="13" cy="15" r="1.6" fill="#223"/>
<path d="M14 22 L24 4" stroke="#d89a50" stroke-width="2.5"/><path d="M23 6 L26 1" stroke="#c08040" stroke-width="3"/></svg>
<div class="a" style="left:437px;top:1039px;width:47px;height:41px;background:#3d3d3e"></div>
<svg class="a" style="left:448px;top:1047px" width="25" height="26">
<path d="M1 3 L4 1 H24 V22 L21 25 H1Z" fill="#b8103a"/><path d="M4 1 H24 V22 H4Z" fill="#e5154a"/><path d="M1 3 L4 1 V22 L1 25Z" fill="#f05a84"/>
<text x="14" y="14" font-family="Liberation Sans" font-weight="bold" font-size="12" fill="#fff" text-anchor="middle">A</text>
<text x="14" y="21.5" font-family="Liberation Sans" font-weight="bold" font-size="5.5" fill="#fff" text-anchor="middle">CAD</text></svg>
<div class="a" style="left:343px;top:1078px;width:40px;height:2px;background:#7fb2e8"></div>
<div class="a" style="left:392px;top:1078px;width:40px;height:2px;background:#7fb2e8"></div>
<div class="a" style="left:437px;top:1078px;width:47px;height:2px;background:#7fb2e8"></div>
<svg class="a" style="left:1757px;top:1054px" width="16" height="10"><path d="M1 9 L8 2 L15 9" stroke="#e8e8e8" stroke-width="1.3" fill="none"/></svg>
<svg class="a" style="left:1779px;top:1051px" width="20" height="18"><path d="M1 6 H4 L9 2 V16 L4 12 H1Z" stroke="#e8e8e8" stroke-width="1.1" fill="none"/><path d="M12 6 C13.5 7.5 13.5 10.5 12 12 M14.5 4 C17 6.5 17 11.5 14.5 14" stroke="#e8e8e8" stroke-width="1" fill="none"/><path d="M17 2.5 C20 6 20 12 17 15.5" stroke="#888" stroke-width="1" fill="none"/></svg>
<div class="t" style="left:1820px;top:1044.9px;color:#f0f0f0;font-size:11px;line-height:12.65px;">19:31</div>
<div class="t" style="left:1807px;top:1062.9px;color:#f0f0f0;font-size:11px;line-height:12.65px;">16.04.2026</div>
<svg class="a" style="left:1878px;top:1051px" width="20" height="18"><path d="M1.5 1.5 H17.5 V13.5 H10 L7 16.5 V13.5 H1.5Z" stroke="#e8e8e8" stroke-width="1.2" fill="none"/></svg>
<div class="a" style="left:1915px;top:1040px;width:1px;height:40px;background:#555"></div>
<svg class="a" style="left:0;top:0" width="1920" height="1080"><g fill="none" stroke="#141414" stroke-width="1.15" stroke-linejoin="round" vector-effect="non-scaling-stroke"><g transform="translate(670 200) scale(0.11111)"><path vector-effect="non-scaling-stroke" d="M305 210 L515 85 L810 100 C850 200 930 290 1060 335 L1185 345 L1020 390 L740 375
M930 290 L325 560
M305 210 C240 300 250 470 325 560
M410 190 L325 445
M480 140 C420 250 420 400 495 485
M540 120 C650 130 760 200 750 330
M325 560 C300 620 320 700 385 740
M380 655 L405 750 L420 610 L465 740 L500 665 L560 730 L580 640
M600 515 L665 515 L615 590 L720 560 L700 685 L915 410 L875 590 L1000 465 L995 600
M1020 395 L995 600
M995 580 C920 640 880 720 890 830 L775 935 L670 890
M600 515 L640 690 L665 520
M615 600 L670 940
M380 760 L345 850 L300 980"/></g>
<g transform="translate(660 290) scale(0.14815)"><path vector-effect="non-scaling-stroke" d="M330 0 C260 200 200 500 195 800 C195 920 205 1000 225 1080
M320 95 C240 350 235 600 265 720
M330 30 L635 135 L690 300 L745 500 L780 830 L740 910 L710 915
M400 65 C320 130 300 250 350 375
M345 220 L350 270
M330 110 C430 60 540 80 590 220
M585 220 C540 480 560 640 670 870 L710 915
M350 240 C370 400 390 530 400 540 C450 650 500 760 520 960
M520 960 L540 990 L560 920 L600 1020 L630 920 L640 1000 L665 900 L680 980 L690 880
M580 150 L690 460
M205 880 L520 960
M225 735 L390 790
M215 800 C260 830 330 850 415 820
M260 855 L500 905
M470 880 L500 820
M575 290 L570 430
M740 760 L725 880
M730 910 L735 1080"/></g>
<g transform="translate(630 440) scale(0.13889)"><path vector-effect="non-scaling-stroke" d="M440 0 C450 100 470 170 490 230
M455 235 C430 250 440 290 470 295 L630 345
M455 235 L580 290
M490 0 C520 150 620 270 870 275
M460 60 L520 160 L650 380 C660 420 690 460 740 460 C770 460 790 440 800 420 L1055 325 L1060 210 L1000 60 L995 0
M1060 210 L975 295 L1000 60
M565 260 C620 320 700 350 860 350
M445 300 L200 560
M660 400 L350 650
M185 550 L280 670
M185 550 L150 600 C100 640 110 720 170 730 C200 700 190 620 150 600
M100 690 L95 745 L455 930 L465 860 L450 800 L350 660 L185 720
M100 690 L460 860
M240 745 L350 700 M300 785 L365 735
M800 420 L870 785 L1025 720 L1020 345
M845 795 L830 930 L1210 935 C1260 945 1300 920 1290 850 L1220 880
M845 795 L900 790 L905 860 L1055 760 L1025 720
M1000 885 L990 810
M1040 885 L1080 760 L1110 745 L1220 805 C1180 850 1120 850 1080 825
M840 875 L1200 885"/></g>
<g transform="translate(965 205) scale(0.18057)"><path vector-effect="non-scaling-stroke" d="M455 275 C440 150 340 70 235 75 C120 80 55 160 60 250 C70 360 160 440 270 440 C370 435 440 380 455 330 L462 290 Z
M445 315 L820 470 M450 330 L810 476"/></g>
<g transform="translate(1080 270) scale(0.12039)"><path vector-effect="non-scaling-stroke" d="M300 420 C255 350 245 250 280 160 C320 80 400 50 460 50 C560 55 640 130 655 230 C665 300 650 360 640 420 C620 500 590 550 555 570
M280 295 L385 345 L480 255 L490 250 L480 275 L600 240 L610 255 L625 245 L640 260
M280 295 C270 340 290 400 330 420 M295 320 L310 380
M505 340 L570 355 M510 375 L545 375 M600 385 L640 375
M600 390 C620 420 610 470 570 465 M548 435 L548 460
M500 495 C530 520 570 525 590 500 C560 490 530 490 500 495
M345 470 L480 570 M300 420 L260 540
M660 335 L1265 585
M560 575 L835 665 L1220 650 L1270 590 C1310 580 1350 590 1360 615 C1360 660 1340 700 1320 720 C1300 730 1250 735 1220 735 L760 785 L580 740
M1320 625 L1345 640 M1285 690 L1340 660
M875 690 L880 735
M255 545 L130 600 C110 620 110 650 130 660 L103 747
M225 560 C280 650 380 740 450 765 C500 740 520 700 525 590 L520 585
M250 550 C300 640 390 720 455 725 C490 700 500 660 500 590
M525 590 C540 610 570 680 575 745
M195 600 C220 700 240 750 260 760 L210 850
M465 600 L460 640 M490 590 L485 615
"/></g>
<g transform="translate(1060 360) scale(0.07407)"><path vector-effect="non-scaling-stroke" d="M420 0 L250 520 L370 740 L630 900 L700 1050 L830 1000 L800 860 L740 800
M400 500 L780 830 L800 870 L820 940
M620 0 C630 50 600 150 520 300 L445 490
M520 290 L765 45 L670 230 M555 330 L855 25 M735 235 L810 90
M450 490 L880 245 M490 570 L980 210 M680 540 L910 355 M870 680 L1075 380
M870 680 C900 720 980 740 1080 700 L1110 600 M975 690 L1100 615
M620 740 L1050 770 L1110 680 M770 705 L960 780 M770 830 L1060 780
M1200 0 L1110 600 M1060 780 L1165 930 L1175 1080
M370 740 L320 850 L280 1080 M430 820 L330 990
M400 960 L570 900 L470 1080 M710 960 L820 1000 M760 880 L820 940
M890 820 L830 1080 M1060 780 L1110 1030"/></g>
<g transform="translate(1050 390) scale(0.18519)"><path vector-effect="non-scaling-stroke" d="M172 270 C160 380 150 450 145 600
M145 590 C250 590 330 580 370 560
M150 600 L355 595
M525 275 L525 290 C580 330 610 420 615 500 C625 560 610 610 570 620 L360 615 L370 455
M370 455 L510 565 M360 520 C430 490 520 470 605 470 M370 530 C450 500 540 490 610 490
M275 425 L420 375 M275 425 C330 340 380 260 390 230
M420 330 C480 300 540 310 560 350 M440 440 C480 400 530 380 580 390
M185 480 L270 370
M180 600 L190 690 C180 780 160 860 140 930 L125 1000 L125 1020 L325 1020 L320 990 L240 915 C250 860 280 790 310 720 L370 600
M200 600 L210 680 L235 630 L225 600
M140 930 L210 900 L250 935 L125 1000 M210 960 C240 990 290 990 315 985 M130 1000 L325 1000"/></g>
<g transform="translate(645 605) scale(0.17129)"><path vector-effect="non-scaling-stroke" d="M430 630 L330 490 C290 430 230 330 245 240 C260 150 350 80 470 65 C540 60 580 80 620 130 C680 200 730 290 740 420 L860 540 L870 640
M385 105 L345 320 L435 630
M475 70 L445 220 C480 300 500 380 495 540 L480 610
M530 165 C560 300 620 400 750 440 C790 500 780 570 780 610
M505 250 L540 460
M270 295 L320 480 L380 530
M480 610 C470 530 530 460 600 450 C650 445 700 480 760 520 L780 610
M495 520 C550 470 610 480 660 500
M650 540 C680 590 670 660 640 700
M410 605 L60 720 L55 740 L100 765 L290 740 L460 750 L760 680
M540 615 L440 630 L130 700 L85 745
M265 720 C280 730 300 740 460 750
M460 750 L500 940
M800 500 L810 620 L590 890 M800 500 L965 860
M720 760 L740 800 L830 790 L655 875
M900 740 C980 760 1040 840 1050 860 L930 915 C880 980 780 1030 650 1030 C540 1030 470 990 430 920 C410 870 430 820 470 810
M960 920 C1010 970 1040 1030 1050 1080
M1010 890 C1050 950 1070 1010 1085 1080
M470 950 C440 1000 430 1040 435 1080 M520 980 L490 1080 M630 1030 L620 1080 M665 1030 L670 1080"/></g>
<g transform="translate(690 770) scale(0.19900)"><path vector-effect="non-scaling-stroke" d="M165 0 L145 60 C160 150 140 300 105 465 C170 480 250 470 300 440 L270 510
M220 30 L150 280 M320 60 L210 465 M345 60 C370 200 340 320 280 420 C400 410 550 370 705 255
M640 255 C690 170 680 60 640 0 M680 0 C720 100 735 200 730 295 L690 300 C690 350 650 370 600 370 L545 375
M270 510 C300 580 310 700 295 870 L260 900 C250 920 270 940 290 945 L375 925 C390 960 385 1000 385 1035 L135 1035 L140 965 L260 900
M140 965 L160 1015 L385 1020
M385 555 C420 650 420 800 375 925
M400 565 L630 305 M505 550 L600 370 M505 555 C580 650 620 780 615 915
M415 615 L525 935 L640 935 L645 1035 L410 1035 L410 1010 L520 905
M410 1015 L645 1015"/></g>
<g transform="translate(1090 600) scale(0.09259)"><path vector-effect="non-scaling-stroke" d="M230 130 C270 90 400 90 480 150 L490 190
M255 160 L440 210
M230 130 L205 280
M440 210 C480 170 560 160 630 180 L890 375 L935 660 L760 840
M300 340 L440 210 M300 340 L400 700
M400 250 C380 320 390 450 460 580 C520 700 620 790 740 850
M200 270 C200 380 250 520 320 620 L560 900 L750 1030
M210 380 C240 520 300 650 400 760 L740 1020
M165 460 C120 600 150 800 260 990
M175 460 L270 910
M320 740 L360 960 M410 850 L440 960
M490 830 L690 1000
M600 900 L640 810 L700 840 C720 880 700 920 690 950
M760 880 L850 780 L860 1080 M760 880 L830 980"/></g>
<g transform="translate(940 600) scale(0.18519)"><path vector-effect="non-scaling-stroke" d="M1222 540 L1230 560 L1250 670 L1225 690 L1185 600
M820 540 L1000 480 L1080 490 L1185 520 L1225 610 L1110 610 L820 545
M820 540 L800 600 L725 650 L760 800 M1230 560 L1350 740 L1300 840
M815 590 C850 570 890 600 870 650 L820 770
M740 750 C720 800 740 830 790 830 C760 870 770 920 830 925
M30 965 L30 990 L90 985 L580 960 L600 970 C640 940 700 900 760 870
M30 965 L420 895 L580 830 L640 835
M90 960 L95 985 M320 965 L500 870 M420 895 L330 960 M520 940 L560 845
M570 950 C560 880 590 840 620 850 M600 945 C610 880 650 850 680 870 M630 935 C650 880 700 850 710 880 L600 960
M700 860 L790 870
M850 780 C860 730 900 720 910 760 L860 810
M830 1080 L860 990 C920 920 1050 860 1170 850 C1250 840 1330 900 1350 1000 L1350 1080
M850 985 L1180 860
M860 1000 L870 1080 M870 1075 L1000 1000
M1000 920 C960 960 970 1020 1040 1030 C1090 1020 1090 950 1060 910
M1110 900 C1150 870 1200 870 1220 890
M990 870 L1020 685 M1090 700 L1120 840 M1110 690 L1250 820 M1190 710 L1290 900 M1260 720 L1300 880
M880 850 L980 690 M940 820 L960 760 M880 855 L940 820
M840 820 C860 900 820 1000 780 1080"/></g>
<g transform="translate(1060 780) scale(0.18519)"><path vector-effect="non-scaling-stroke" d="M180 40 L300 290 L680 145 C710 100 700 40 670 0
M210 20 L210 100 L350 35 M300 295 L680 160 M350 0 C360 40 420 60 440 20 L440 0 M180 40 L215 20
M60 300 L200 0
M60 300 L160 350 L155 470 L390 540 L600 510 L600 345 L610 360 L680 340 L640 220 L680 200 L680 145
M120 265 L155 270 L185 120 Z
M60 300 L250 300 M185 105 L280 340 C350 370 450 330 510 300 C570 300 600 330 600 345
M400 540 L540 320 M390 440 L450 330 M340 445 L380 445 M520 330 L520 500 L570 485 M490 250 L560 240 M620 350 L665 310 M610 360 L640 240
M190 490 C220 520 210 550 205 570 L145 900 M340 540 L230 920 M215 565 C240 600 280 600 300 560 M390 545 L420 915 M535 520 L545 760 C500 820 490 900 530 965 M430 595 L465 585
M145 900 C100 920 85 970 85 1025 L225 1025 L230 915 C210 895 180 890 145 900 M90 1020 L225 1020
M405 920 L405 1025 L620 1025 L610 970 L530 960 L405 920 M410 1015 L615 1020"/></g></g></svg>
<svg class="a" style="left:80px;top:764px" width="100" height="126" viewBox="80 764 100 126">
<defs>
<linearGradient id="dwgb" x1="0" y1="0" x2="1" y2="1"><stop offset="0" stop-color="#163c78"/><stop offset="1" stop-color="#2c5896"/></linearGradient>
<linearGradient id="dwgy" x1="0" y1="0" x2="1" y2="0"><stop offset="0" stop-color="#f6e890"/><stop offset="0.5" stop-color="#f2d22a"/><stop offset="1" stop-color="#f6e070"/></linearGradient>
</defs>
<path d="M84.5 768.5 H138 C141 768.5 143 770 145 772 L171 799 C173 801 174 803 174 806 V851 L84.5 831 Z" fill="url(#dwgb)"/>
<path d="M84.5 831 L174 851 V885.5 H84.5 Z" fill="url(#dwgy)"/>

<path d="M146 773 L172 800 C165 797 158 795 153 793 C150 786 148 780 146 773Z" fill="#4a74b4"/><path d="M153 793 C158 795 165 797 172 800 C170 803 160 804 150 804 C152 800 153 797 153 793Z" fill="#0e2a5a"/>
<path d="M110.8 768.5 V831.5 M84.5 806.7 H174" stroke="#ffffff" stroke-width="2.2"/>
<rect x="101" y="797" width="19.5" height="20" fill="#1e4a88" stroke="#fff" stroke-width="2.2"/>
<rect x="109.5" y="806" width="2" height="2" fill="#fff"/>
<text x="108" y="879" font-family="Liberation Sans" font-weight="bold" font-size="28" fill="#111" stroke="#111" stroke-width="0.9" letter-spacing="-0.3">.dwg</text>
</svg>
<svg class="a" style="left:5px;top:900px" width="242" height="94" viewBox="5 900 242 94">
<defs>
<linearGradient id="dlr" x1="0" y1="0" x2="0" y2="1"><stop offset="0" stop-color="#ea1c24"/><stop offset="0.55" stop-color="#e41c24"/><stop offset="1" stop-color="#c41c26"/></linearGradient>
<radialGradient id="dlc" cx="0.4" cy="0.35" r="0.7"><stop offset="0" stop-color="#c81c20"/><stop offset="1" stop-color="#8a0a0e"/></radialGradient>
</defs>
<rect x="9" y="905" width="233" height="84" rx="42" fill="url(#dlr)"/>
<path d="M50 905.5 H200 A41.5 41.5 0 0 1 241.5 947 A42 42 0 0 0 200 907.5 H50 Z" fill="#6a0a0a" opacity="0.8"/>
<circle cx="199" cy="947.5" r="25" fill="#7a0808"/><circle cx="199" cy="948" r="23" fill="url(#dlc)"/>
<path d="M193 930 H205 V947 H213 L199 965 L185 947 H193 Z" fill="#fff"/>
<text x="28" y="960" font-family="Liberation Sans" font-weight="bold" font-size="29.5" fill="#fff" stroke="#fff" stroke-width="1.3" transform="translate(28 960) scale(0.8 1) translate(-28 -960)">DOWNLOAD</text>
</svg>
<svg class="a" style="left:1660px;top:180px" width="230" height="220" viewBox="0 0 1129 1080"><defs><linearGradient id="hairg" x1="0" y1="0" x2="0" y2="1"><stop offset="0" stop-color="#f8c828"/><stop offset="1" stop-color="#f09a10"/></linearGradient></defs>
<g stroke="#2a1a10" stroke-width="8" stroke-linejoin="round">
<!-- white sticker outline -->
<!-- legs -->
<path d="M330 830 C320 880 300 920 290 950 L370 965 C390 930 430 900 470 880 C520 880 560 900 600 950 L690 940 C670 890 640 860 610 840 Z" fill="#2a82d8"/>
<path d="M290 950 L370 965 L385 995 C350 1025 290 1035 240 1022 C245 1000 270 975 290 950Z" fill="#2a82d8"/>
<path d="M625 955 L700 935 L720 990 C740 1040 745 1070 712 1062 C680 1040 660 1000 640 985Z" fill="#2a82d8"/>
<path d="M292 935 L372 955 L368 985 L285 965 Z" fill="#4a4a50"/>
<path d="M615 950 L695 930 L705 970 L630 990 Z" fill="#4a4a50"/>
<!-- body -->
<path d="M420 560 C360 590 310 630 280 680 L330 725 C360 700 385 680 400 660 L395 830 C470 855 540 865 615 850 L640 700 C690 690 740 670 775 645 C790 600 790 570 770 540 L720 540 L700 600 L650 590 L560 560 Z" fill="#2a82d8"/>
<path d="M505 600 L545 640 L560 845 L520 845 L495 680 Z" fill="#6a6e78"/>
<path d="M395 815 C470 840 540 850 615 835 L612 870 C540 885 470 875 393 850 Z" fill="#6a6e78"/>
<!-- stick -->
<path d="M60 760 L940 420 L955 455 L80 790 Z" fill="#9a5a24"/>
<!-- hands -->
<ellipse cx="265" cy="705" rx="45" ry="38" fill="#f2c08a"/>
<ellipse cx="755" cy="505" rx="42" ry="38" fill="#f2c08a"/>
<!-- blob -->
<path d="M890 280 C930 260 1000 330 1050 350 C1080 370 1070 430 1040 470 L1035 570 C1030 590 1005 585 1005 560 L1000 500 C980 510 960 490 950 470 C930 420 900 330 890 280 Z" fill="#f5b818"/>
<!-- face -->
<path d="M320 310 C310 400 330 500 420 540 C480 570 580 570 650 540 C720 500 760 440 760 350 L735 300 L320 300 Z" fill="#f2c08a"/>
<ellipse cx="735" cy="380" rx="32" ry="45" fill="#f2c08a"/>
<!-- hair -->
<path d="M335 235 L345 120 L380 150 L400 75 L440 95 L480 40 L510 60 L570 25 L580 55 L640 60 L650 80 L700 110 L690 140 L730 175 L725 235 Z" fill="url(#hairg)"/>
<path d="M700 310 L735 300 L740 370 L700 360 Z" fill="#f0a020" stroke="none"/>
<!-- headband -->
<path d="M305 225 C450 220 600 215 735 235 L735 320 C600 300 450 300 310 300 Z" fill="#404248"/>
<path d="M730 230 C780 220 850 240 885 275 C850 280 820 270 800 275 C830 300 835 340 820 375 C790 340 770 300 735 300 Z" fill="#404248"/>
</g>
<!-- eyes -->
<g stroke="#2a1a10" stroke-width="6">
<ellipse cx="430" cy="345" rx="58" ry="32" fill="#fff"/>
<ellipse cx="590" cy="350" rx="58" ry="32" fill="#fff"/>
</g>
<circle cx="432" cy="348" r="22" fill="#3a90d8"/><circle cx="588" cy="352" r="22" fill="#3a90d8"/>
<circle cx="432" cy="348" r="10" fill="#15324a"/><circle cx="588" cy="352" r="10" fill="#15324a"/>
<path d="M470 395 C470 420 500 430 520 415" stroke="#2a1a10" stroke-width="6" fill="none"/>
<path d="M430 455 C480 490 560 490 600 455" stroke="#2a1a10" stroke-width="8" fill="none"/>
<path d="M310 720 L300 760 M770 570 L760 620" stroke="#fff" stroke-width="0"/>
</svg>
<svg class="a" style="left:1610px;top:375px" width="310" height="90" viewBox="0 0 1920 557">
<defs><linearGradient id="ptg" x1="0" y1="0" x2="0" y2="1"><stop offset="0" stop-color="#3ab0ea"/><stop offset="1" stop-color="#1a6ed0"/></linearGradient></defs>
<g fill="none" stroke="#ffffff" stroke-width="70" stroke-linecap="round" stroke-linejoin="round" opacity="0.9">
</g>
<g fill="none" stroke="url(#ptg)" stroke-width="42" stroke-linecap="round" stroke-linejoin="round">
<path d="M95 100 L85 320"/>
<path d="M90 100 C170 80 240 120 265 180 C280 220 300 235 290 240 C230 245 160 240 115 235"/>
<path d="M305 345 L315 395"/>
<path d="M465 300 C420 290 375 310 400 350 C430 380 470 390 455 420 C440 440 390 430 365 420"/>
<path d="M545 240 L570 455"/>
<path d="M640 360 L650 440"/>
<path d="M710 280 L735 470"/>
<path d="M800 330 L745 390 L870 450"/>
<path d="M950 440 L915 265 L1014 375 L1101 242 L1164 474"/>
<path d="M1112 312 L1183 316"/>
<ellipse cx="1245" cy="434" rx="24" ry="34" fill="#1a6ed0" stroke="none"/>
<path d="M1270 381 L1328 434 L1392 341 L1449 393 L1542 289"/>
<path d="M1720 300 C1690 250 1590 260 1600 330 C1610 380 1700 350 1720 300 L1769 341"/>
<path d="M1827 312 L1757 236 C1790 200 1840 185 1879 178"/>
</g>
<circle cx="615" cy="300" r="13" fill="#777"/><circle cx="355" cy="352" r="8" fill="#555"/>
</svg>
</body></html>
